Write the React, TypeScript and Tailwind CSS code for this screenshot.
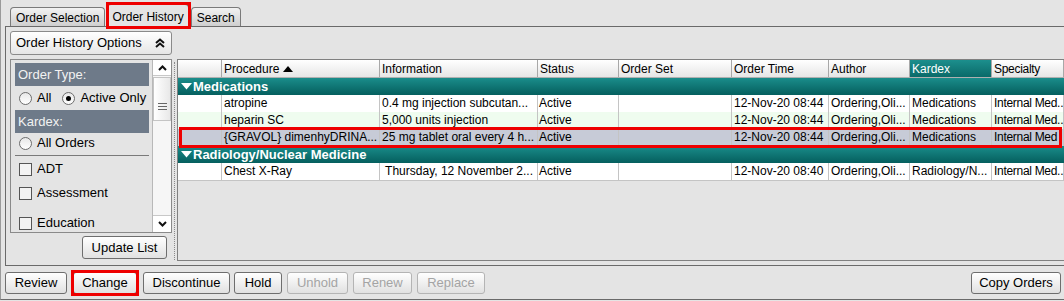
import React from "react";

const font = "font-['Liberation_Sans',Arial,sans-serif]";

const colW = [
  "w-[44px]",
  "w-[158px]",
  "w-[158px]",
  "w-[81px]",
  "w-[113px]",
  "w-[97px]",
  "w-[81px]",
  "w-[82px]",
  "flex-1 tracking-[-0.3px]",
];

type Row = { cells: string[]; bg: string; selected?: boolean };

const medRows: Row[] = [
  {
    cells: ["", "atropine", "0.4 mg injection subcutan...", "Active", "", "12-Nov-20 08:44", "Ordering,Oli...", "Medications", "Internal Med.."],
    bg: "bg-white",
  },
  {
    cells: ["", "heparin SC", "5,000 units injection", "Active", "", "12-Nov-20 08:44", "Ordering,Oli...", "Medications", "Internal Med.."],
    bg: "bg-[#effcef]",
  },
  {
    cells: ["", "{GRAVOL} dimenhyDRINA...", "25 mg tablet oral every 4 h...", "Active", "", "12-Nov-20 08:44", "Ordering,Oli...", "Medications", "Internal Med"],
    bg: "bg-[#c7cbd7]",
    selected: true,
  },
];

const radRows: Row[] = [
  {
    cells: ["", "Chest X-Ray", " Thursday, 12 November 2...", "Active", "", "12-Nov-20 08:40", "Ordering,Oli...", "Radiology/N...", "Internal Med.."],
    bg: "bg-white",
  },
];

function Tab({ label, active }: { label: string; active?: boolean }) {
  if (active) {
    return (
      <div className="relative z-10 -mb-px flex h-[23px] items-center rounded-t-[4px] border border-b-0 border-[#7a7a7a] bg-[#e4e4e4] px-[4px]">
        <span className="pt-[1px]">{label}</span>
        <span className="pointer-events-none absolute -left-[2px] -right-[3px] -top-[3px] -bottom-[2px] border-[3px] border-[#ee0000]" />
      </div>
    );
  }
  return (
    <div className="flex h-[19px] items-center rounded-t-[4px] border border-b-0 border-[#7a7a7a] bg-gradient-to-b from-[#f2f2f2] to-[#cfcfcf] px-[5px]">
      <span className="pt-[2px]">{label}</span>
    </div>
  );
}

function Btn({ label, disabled, boxed, className = "" }: { label: string; disabled?: boolean; boxed?: boolean; className?: string }) {
  return (
    <div
      className={`relative flex h-[22px] items-center justify-center rounded-[3px] border bg-gradient-to-b from-white to-[#e1e1e1] ${
        disabled ? "border-[#b4b4b4] text-[#a4a4a4]" : "border-[#6e6e6e] text-black"
      } ${className}`}
    >
      {label}
      {boxed && (
        <span className="pointer-events-none absolute -left-[3px] -right-[3px] -top-[3px] -bottom-[3px] border-[3px] border-[#ee0000]" />
      )}
    </div>
  );
}

function Radio({ checked }: { checked?: boolean }) {
  return (
    <span className="flex h-[13px] w-[13px] items-center justify-center rounded-full border border-[#6d6d6d] bg-gradient-to-b from-[#e8e8e8] to-white">
      {checked && <span className="h-[5px] w-[5px] rounded-full bg-black" />}
    </span>
  );
}

function Check() {
  return <span className="block h-[13px] w-[13px] border border-[#555] bg-[#f3f3f3]" />;
}

function Chevron({ up }: { up?: boolean }) {
  return (
    <svg width="9" height="6" viewBox="0 0 9 6">
      <path d={up ? "M1 5 L4.5 1.5 L8 5" : "M1 1 L4.5 4.5 L8 1"} fill="none" stroke="#111" strokeWidth="2" />
    </svg>
  );
}

function GroupRow({ label }: { label: string }) {
  return (
    <div className="flex h-[17px] items-center bg-gradient-to-b from-[#1a8d8b] to-[#055f5e] pl-[3px] text-[13px] font-bold text-white">
      <svg width="11" height="7" viewBox="0 0 11 7" className="mr-[1px]">
        <path d="M0 0 H11 L5.5 6.5 Z" fill="#fff" />
      </svg>
      <span>{label}</span>
    </div>
  );
}

function DataRow({ row }: { row: Row }) {
  return (
    <div className={`relative flex h-[17px] ${row.bg}`}>
      {row.cells.map((c, i) => (
        <div
          key={i}
          className={`${colW[i]} shrink-0 overflow-hidden whitespace-pre border-r border-[#c4c4c4] leading-[17px] ${
            i === 3 ? "pl-[1px]" : "pl-[2px]"
          }`}
        >
          {c}
        </div>
      ))}
      {row.selected && (
        <span className="pointer-events-none absolute left-[1px] right-[2px] -top-[2px] -bottom-[2px] border-[3px] border-[#ee0000]" />
      )}
    </div>
  );
}

const headers = ["", "Procedure", "Information", "Status", "Order Set", "Order Time", "Author", "Kardex", "Specialty"];

export default function App() {
  return (
    <div className={`${font} h-[301px] w-[1064px] overflow-hidden bg-[#e4e4e4] text-[12px] text-black`}>
      <div className="h-[300px] border-b border-l border-[#9a9a9a] border-b-[#6a6a6a]">
        {/* tabs */}
        <div className="flex h-[26px] items-end gap-[2px] pl-[9px]">
          <Tab label="Order Selection" />
          <Tab label="Order History" active />
          <Tab label="Search" />
        </div>

        {/* tab panel */}
        <div className="ml-[4px] flex h-[240px] border-b border-l border-t border-[#6a6a6a] pl-[4px]">
          {/* left options */}
          <div className="flex w-[162px] shrink-0 flex-col pt-[4px]">
            <div className="flex h-[24px] items-center justify-between rounded-[3px] border border-[#8a8a8a] bg-gradient-to-b from-white to-[#e6e6e6] pl-[5px] pr-[6px] text-[13px]">
              <span>Order History Options</span>
              <svg width="10" height="10" viewBox="0 0 10 10">
                <path d="M1 5 L5 1.5 L9 5 M1 9 L5 5.5 L9 9" fill="none" stroke="#111" strokeWidth="2" />
              </svg>
            </div>

            <div className="mt-[4px] flex h-[174px] border border-[#8a8a8a] bg-[#e4e4e4]">
              <div className="flex-1 overflow-hidden pl-[4px] pr-[3px] pt-[3px]">
                <div className="flex h-[23px] items-center bg-[#6e7a89] pl-[3px] text-[13px] text-[#f2f2f2]">Order Type:</div>
                <div className="flex h-[24px] items-center pl-[4px] text-[13px]">
                  <Radio />
                  <span className="ml-[5px]">All</span>
                  <span className="ml-[11px]" />
                  <Radio checked />
                  <span className="ml-[5px]">Active Only</span>
                </div>
                <div className="flex h-[23px] items-center bg-[#6e7a89] pl-[3px] text-[13px] text-[#f2f2f2]">Kardex:</div>
                <div className="flex h-[20px] items-center pl-[4px] text-[13px]">
                  <Radio />
                  <span className="ml-[5px]">All Orders</span>
                </div>
                <div className="mt-[2px] border-t border-[#7a7a7a]" />
                <div className="mt-[6px] flex h-[14px] items-center pl-[4px] text-[13px]">
                  <Check />
                  <span className="ml-[5px]">ADT</span>
                </div>
                <div className="mt-[10px] flex h-[14px] items-center pl-[4px] text-[13px]">
                  <Check />
                  <span className="ml-[5px]">Assessment</span>
                </div>
                <div className="mt-[16px] flex h-[14px] items-center pl-[4px] text-[13px]">
                  <Check />
                  <span className="ml-[5px]">Education</span>
                </div>
              </div>
              {/* scrollbar */}
              <div className="flex w-[19px] shrink-0 flex-col border-l border-[#b8b8b8] bg-[#f6f6f6]">
                <div className="flex h-[16px] items-center justify-center border-b border-[#c8c8c8] bg-white">
                  <Chevron up />
                </div>
                <div className="mt-[1px] flex h-[44px] flex-col items-center justify-center gap-[2px] border border-[#c4c4c4] bg-gradient-to-r from-white to-[#e8e8e8] pt-[14px]">
                  <span className="block h-px w-[9px] bg-[#666]" />
                  <span className="block h-px w-[9px] bg-[#666]" />
                  <span className="block h-px w-[9px] bg-[#666]" />
                </div>
                <div className="flex-1" />
                <div className="flex h-[17px] items-center justify-center border-t border-[#c8c8c8] bg-white">
                  <Chevron />
                </div>
              </div>
            </div>

            <div className="mt-[3px] flex justify-end pr-[5px]">
              <Btn label="Update List" className="h-[23px] w-[85px] text-[13px]" />
            </div>
          </div>

          {/* divider */}
          <div className="mx-[2px] mb-[5px] mt-[35px] w-0 border-l border-dotted border-[#8a8a8a]" />

          {/* table */}
          <div className="mb-[4px] mt-[32px] flex flex-1 flex-col overflow-hidden border-b border-l border-t border-[#808080] bg-[#e4e4e4]">
            <div className="flex h-[18px] border-b border-[#b0b0b0]">
              {headers.map((h, i) => (
                <div
                  key={i}
                  className={`${colW[i]} flex shrink-0 items-center border-r border-[#a8a8a8] pl-[2px] ${
                    h === "Kardex"
                      ? "bg-gradient-to-b from-[#1c8f8d] to-[#0a6a69] text-white"
                      : "bg-gradient-to-b from-white to-[#e6e6e6]"
                  }`}
                >
                  {h}
                  {h === "Procedure" && (
                    <svg width="10" height="6" viewBox="0 0 10 6" className="ml-[4px]">
                      <path d="M0 6 H10 L5 0 Z" fill="#000" />
                    </svg>
                  )}
                </div>
              ))}
            </div>
            <GroupRow label="Medications" />
            {medRows.map((r, i) => (
              <DataRow key={i} row={r} />
            ))}
            <GroupRow label="Radiology/Nuclear Medicine" />
            {radRows.map((r, i) => (
              <DataRow key={i} row={r} />
            ))}
            <div className="border-t border-[#c4c4c4]" />
          </div>
        </div>

        {/* bottom buttons */}
        <div className="flex h-[33px] items-center pl-[4px] pr-[3px] text-[13px]">
          <Btn label="Review" className="w-[62px]" />
          <Btn label="Change" boxed className="ml-[6px] w-[64px]" />
          <Btn label="Discontinue" className="ml-[6px] w-[87px]" />
          <Btn label="Hold" className="ml-[4px] w-[48px]" />
          <Btn label="Unhold" disabled className="ml-[5px] w-[61px]" />
          <Btn label="Renew" disabled className="ml-[5px] w-[59px]" />
          <Btn label="Replace" disabled className="ml-[5px] w-[68px]" />
          <div className="flex-1" />
          <Btn label="Copy Orders" className="w-[90px]" />
        </div>
      </div>
    </div>
  );
}
